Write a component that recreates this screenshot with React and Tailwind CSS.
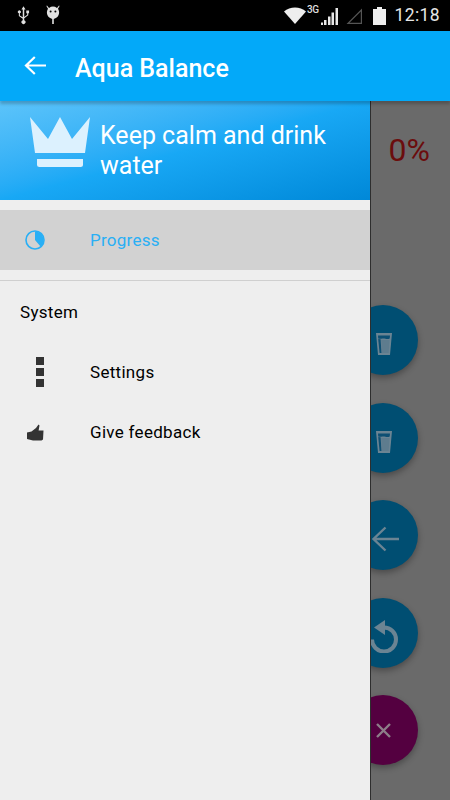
import React from "react";

const font = { fontFamily: "Roboto, 'Noto Sans', sans-serif" };

function Fab({ color, children, mt }) {
  return (
    <div className={`w-[70px] h-[70px] shrink-0 rounded-full flex items-center justify-center shadow-[0_3px_6px_rgba(0,0,0,0.3)] ${color} ${mt}`}>
      {children}
    </div>
  );
}

const Glass = () => (
  <svg width="16" height="22" viewBox="0 0 16 22" className="mt-[8px] ml-[1px]" aria-hidden="true">
    <path d="M0 0H16L14 22H2Z" fill="#6b8493" />
    <path d="M2 2.5H14L13.7 5.5C11 7 9 5 6.5 5.5C5 5.8 3.5 6 2.2 5.5Z" fill="#0d4f73" />
    <path d="M2.2 6L3.6 20H5.5L4.6 6.2Z" fill="#0d4f73" />
    <path d="M5.2 7H13.6L12.6 20H6Z" fill="#5e7c8e" />
  </svg>
);

export default function App() {
  return (
    <div className="w-[450px] h-[800px] flex flex-col overflow-hidden bg-[#6a6a6a]" style={font}>
      <div className="h-[31px] shrink-0 bg-black flex items-center pl-[17px] pr-[10px] text-[#e6e6e6]">
        <svg width="13" height="19" viewBox="0 0 14 20" className="mt-[-1px]" aria-hidden="true">
          <path d="M7 0L9.2 3.5H7.8V11.5L11 9.2V7.5H10V4.6H13V7.5H12.1V9.8L7.8 13V15.2A2.1 2.1 0 1 1 6.2 15.2V13.5L2 10.5V7.6A1.6 1.6 0 1 1 3.1 7.6V9.9L6.2 12V3.5H4.8Z" fill="#e0e0e0" />
        </svg>
        <svg width="14" height="20" viewBox="0 0 14 20" className="ml-[16px] mt-[-1px]" aria-hidden="true">
          <path d="M1 0.5L3 3A7 7 0 0 1 11 3L13 0.5L13.6 1L12 3.8A6.6 6.6 0 0 1 7.8 13.9V19H6.2V13.9A6.6 6.6 0 0 1 2 3.8L0.4 1Z" fill="#e0e0e0" />
          <circle cx="4.6" cy="6.6" r="1" fill="#000" />
          <circle cx="9.4" cy="6.6" r="1" fill="#000" />
        </svg>
        <div className="flex-1" />
        <svg width="22" height="17" viewBox="0 0 22 17" aria-hidden="true">
          <path d="M0 4.5C6 -1 16 -1 22 4.5L11 17Z" fill="#eeeeee" />
        </svg>
        <span className="text-[10px] leading-none font-medium self-start mt-[5px] ml-[1px] tracking-[-0.6px] text-[#ddd]">3G</span>
        <svg width="18" height="18" viewBox="0 0 18 18" className="ml-[3px]" aria-hidden="true">
          <path d="M0 15.5H2V18H0ZM3 13H5.5V18H3ZM7 9.5H9.5V18H7ZM10.5 5.5H13V18H10.5ZM14.5 1H17V18H14.5Z" fill="#e8e8e8" />
        </svg>
        <svg width="18" height="18" viewBox="0 0 18 18" className="ml-[6px]" aria-hidden="true">
          <path d="M17 1.5V17H1.5ZM15.8 4.5L4.5 15.8H15.8Z" fill="#555" />
        </svg>
        <svg width="13" height="18" viewBox="0 0 13 18" className="ml-[10px]" aria-hidden="true">
          <path d="M4 0H9V2H13V18H0V2H4Z" fill="#eeeeee" />
        </svg>
        <span className="ml-[8px] text-[17.5px] leading-none font-normal text-[#e6e6e6] tracking-[0.4px]">12:18</span>
      </div>

      <header className="h-[70px] shrink-0 bg-[#03a9f9] flex items-center text-white relative z-20 shadow-[0_3px_3px_rgba(0,0,0,0.22)]">
        <svg width="22" height="20" viewBox="0 0 22 20" className="ml-[24px]" fill="none" stroke="#fff" strokeWidth="2.2" aria-hidden="true">
          <path d="M22 9.5H2.5M10.8 1L2 9.5L10.8 18" />
        </svg>
        <h1 className="ml-[29px] text-[25px] font-medium leading-none mt-[4px]">Aqua Balance</h1>
      </header>

      <div className="flex-1 flex min-h-0">
        <nav className="w-[371px] shrink-0 bg-[#eeeeee] flex flex-col relative z-10 border-r border-[#2e2e2e]">
          <div className="h-[99px] shrink-0 bg-gradient-to-br from-[#5cc4fa] via-[#18a8f5] to-[#0088d8] flex items-start pl-[30px] pt-[15px]">
            <svg width="60" height="52" viewBox="0 0 60 52" className="shrink-0" aria-hidden="true">
              <path d="M0 1L18 23L30 1L42 23L60 1L55 37H5Z" fill="#dcf1fe" />
              <path d="M7 43H53V48.5Q53 51 50.5 51H9.5Q7 51 7 48.5Z" fill="#dcf1fe" />
            </svg>
            <p className="ml-[10px] w-[260px] text-white text-[25px] leading-[30px] mt-[5px]">Keep calm and drink water</p>
          </div>

          <div className="mt-[10px] h-[60px] bg-[#d2d2d2] flex items-center pl-[25px] shrink-0">
            <svg width="20" height="20" viewBox="0 0 20 20" aria-hidden="true">
              <circle cx="10" cy="10" r="9" fill="none" stroke="#29aff5" strokeWidth="1.6" />
              <path d="M10 1.5A8.5 8.5 0 0 1 15.5 16.5L10 10Z" fill="#29aff5" />
            </svg>
            <span className="ml-[45px] text-[#29aff5] text-[17px] font-[450] tracking-[0.25px] mt-[2px]">Progress</span>
          </div>

          <div className="mt-[10px] h-px bg-[#cfcfcf] shrink-0" />

          <div className="pl-[20px] h-[62px] flex items-center text-black text-[17px] font-[450] tracking-[0.3px] shrink-0 pt-[1px]">System</div>

          <div className="h-[60px] flex items-center pl-[36px] shrink-0">
            <div className="w-[8px] flex flex-col gap-[3px] mt-[-3px]">
              <div className="h-[8px] bg-[#333]" />
              <div className="h-[8px] bg-[#333]" />
              <div className="h-[8px] bg-[#333]" />
            </div>
            <span className="ml-[46px] text-black text-[17px] font-[450] tracking-[0.3px]">Settings</span>
          </div>

          <div className="h-[60px] flex items-center pl-[26px] shrink-0">
            <svg width="18" height="18" viewBox="0 0 18 18" className="mt-[-1px]" aria-hidden="true">
              <path d="M1 8.5L5.5 7.5L10 4L12.5 0.5L13.5 1.5L12.6 6.5H17.5L17 15.5L15.5 16.5H7L1 15Z" fill="#333" />
            </svg>
            <span className="ml-[46px] text-black text-[17px] font-[450] tracking-[0.3px]">Give feedback</span>
          </div>
        </nav>

        <main className="flex-1 min-w-0 flex flex-col items-end pr-[32px]">
          <div className="w-[70px] flex justify-end mt-[31px] mr-[-12px] text-[32px] leading-[36px] text-[#6b0d0d] shrink-0">0%</div>
          <Fab color="bg-[#004e72]" mt="mt-[137px]"><Glass /></Fab>
          <Fab color="bg-[#004e72]" mt="mt-[28px]"><Glass /></Fab>
          <Fab color="bg-[#004e72]" mt="mt-[27px]">
            <svg width="28" height="26" viewBox="0 0 28 26" fill="none" stroke="#6b8493" strokeWidth="2.4" className="ml-[3px] mt-[8px]" aria-hidden="true">
              <path d="M28 13H3M14.5 1.5L2.5 13L14.5 24.5" />
            </svg>
          </Fab>
          <Fab color="bg-[#004e72]" mt="mt-[28px]">
            <svg width="28" height="33" viewBox="0 0 28 33" fill="none" className="ml-[2px] mt-[7px]" aria-hidden="true">
              <path d="M14 7.5A12 12 0 1 1 2 19.5" stroke="#6b8493" strokeWidth="4" />
              <path d="M15 0V15L4 7.5Z" fill="#6b8493" />
            </svg>
          </Fab>
          <Fab color="bg-[#540040]" mt="mt-[27px]">
            <svg width="15" height="15" viewBox="0 0 15 15" stroke="#8d7e89" strokeWidth="2.4" className="ml-[1px]" aria-hidden="true">
              <path d="M1 1L14 14M14 1L1 14" />
            </svg>
          </Fab>
        </main>
      </div>
    </div>
  );
}
